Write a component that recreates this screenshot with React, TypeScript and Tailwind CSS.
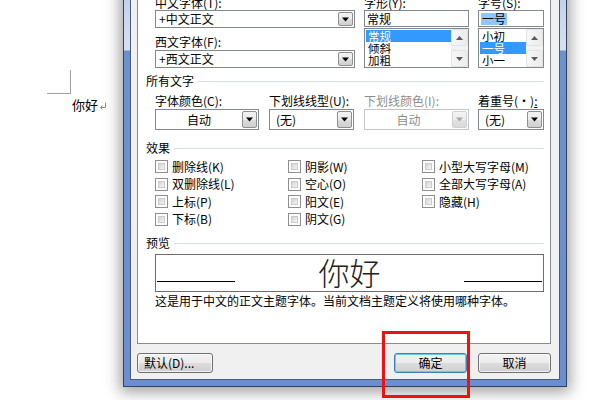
import React from "react";

const FONT = "font-['Noto_Sans_CJK_SC',sans-serif]";

function Arrow({ disabled }: { disabled?: boolean }) {
  return (
    <svg width="7" height="5" viewBox="0 0 7 5">
      <polygon points="0,0.5 7,0.5 3.5,4.5" fill={disabled ? "#a8a8a8" : "#000"} />
    </svg>
  );
}

function DropBtn({ disabled }: { disabled?: boolean }) {
  return (
    <div
      className={
        disabled
          ? "w-[15px] self-stretch my-[1px] mr-[1px] flex items-center justify-center rounded-[2px] border border-[#d0d0d0] bg-[linear-gradient(to_bottom,#f4f4f4,#ececec_50%,#e2e2e2_51%,#dadada)]"
          : "w-[15px] self-stretch my-[1px] mr-[1px] flex items-center justify-center rounded-[2px] border border-[#8e8f8f] bg-[linear-gradient(to_bottom,#f2f2f2,#ebebeb_50%,#dddddd_51%,#cfcfcf)]"
      }
    >
      <Arrow disabled={disabled} />
    </div>
  );
}

function ScrollArrow({ up }: { up?: boolean }) {
  return (
    <div className="h-[17px] flex items-center justify-center rounded-[2px] border border-[#e2e3e4] bg-[linear-gradient(to_right,#f7f7f7,#ececec)]">
      <svg width="7" height="4" viewBox="0 0 7 4">
        <polygon points={up ? "0,4 3.5,0 7,4" : "0,0 7,0 3.5,4"} fill="#5a5a5a" />
      </svg>
    </div>
  );
}

function ListBox({ items, sel }: { items: string[]; sel: number }) {
  return (
    <div className="mt-[1px] h-[40px] border border-[#828790] bg-white flex">
      <div className="flex-1 pt-[1px] pl-[1px]">
        {items.map((it, i) => (
          <div
            key={it}
            className={
              i === sel
                ? "h-[12px] leading-[12px] text-[11.5px] pl-[2px] bg-[#3399ff] text-white"
                : "h-[12px] leading-[12px] text-[11.5px] pl-[2px] text-black"
            }
          >
            {it}
          </div>
        ))}
      </div>
      <div className="w-[17px] flex flex-col justify-between bg-[#f3f3f3]">
        <ScrollArrow up />
        <ScrollArrow />
      </div>
    </div>
  );
}

function Header({ text }: { text: string }) {
  return (
    <div className="ml-[-9px] h-[12px] flex items-center">
      <span className="leading-[12px]">{text}</span>
      <div className="flex-1 ml-[4px] h-px bg-[#d5dfe5]" />
    </div>
  );
}

function Cb({ label }: { label: string }) {
  return (
    <div className="h-[17.5px] flex items-center">
      <span className="w-[13px] h-[13px] border border-[#8f8f8f] bg-white p-[2px] flex">
        <span className="flex-1 border border-[#cbcbcb] bg-[linear-gradient(135deg,#d2d2d2,#f6f6f6)]" />
      </span>
      <span className="ml-[4px] leading-[12px]">{label}</span>
    </div>
  );
}

export default function App() {
  return (
    <div className={`relative w-[600px] h-[400px] overflow-hidden bg-white text-black ${FONT}`}>
      {/* document */}
      <div className="pt-[70px] pl-[47px]">
        <div className="w-[24px] h-[24px] border-r border-b border-[#a0a0a0]" />
        <div className="pl-[25px] mt-[4px] flex items-end text-[13px] leading-[14px]">
          <span>你好</span>
          <svg width="8" height="8" viewBox="0 0 8 8" className="mb-[2px] ml-[1px]">
            <path d="M6.5 0.5 V5.5 H1.5" stroke="#8a8a8a" fill="none" strokeWidth="1" />
            <path d="M3.5 3.5 L1.5 5.5 L3.5 7.5" stroke="#8a8a8a" fill="none" strokeWidth="1" />
          </svg>
        </div>
      </div>

      {/* dialog window */}
      <div className="absolute left-[123px] top-[-30px] w-[444px] h-[417px] border border-[#34435a] p-[6px] bg-[linear-gradient(to_bottom,#b3c7e7_0px,#c7d6ee_40px,#d5e0f2_79px,#6c91d0_80px,#6a8ed0_100%)] shadow-[0_2px_14px_3px_rgba(0,0,0,0.38)]">
        <div className="h-full border border-[#4a5b78] bg-[#f0f0f0] pt-[6px] pl-[6px] pr-[8px] pb-[6px] flex flex-col text-[12px] leading-[12px]">
          {/* tab page */}
          <div className="h-[360px] shrink-0 border border-[#898c95] bg-white pl-[17px] pr-[6px] pt-[12px]">
            {/* row 1 */}
            <div className="flex">
              <div className="w-[200px]">
                <div className="h-[12px]">中文字体(T):</div>
                <div className="mt-[1px] h-[18px] border border-[#828790] bg-white flex items-center">
                  <span className="flex-1 pl-[3px]">+中文正文</span>
                  <DropBtn />
                </div>
                <div className="mt-[8px] h-[12px]">西文字体(F):</div>
                <div className="mt-[2px] h-[18px] border border-[#828790] bg-white flex items-center">
                  <span className="flex-1 pl-[3px]">+西文正文</span>
                  <DropBtn />
                </div>
              </div>
              <div className="w-[105px] ml-[9px]">
                <div className="h-[12px]">字形(Y):</div>
                <div className="mt-[1px] h-[17px] border border-[#828790] bg-white flex items-center pl-[2px]">
                  常规
                </div>
                <ListBox items={["常规", "倾斜", "加粗"]} sel={0} />
              </div>
              <div className="w-[66px] ml-[9px]">
                <div className="h-[12px]">字号(S):</div>
                <div className="mt-[1px] h-[17px] border border-[#828790] bg-white flex items-center pl-[2px]">
                  <span className="bg-[#90c6ff] px-[1px]">一号</span>
                </div>
                <ListBox items={["小初", "一号", "小一"]} sel={1} />
              </div>
            </div>

            {/* all text */}
            <div className="mt-[7px]">
              <Header text="所有文字" />
            </div>
            <div className="mt-[8px] flex">
              <div className="w-[104px]">
                <div className="h-[12px]">字体颜色(C):</div>
                <div className="mt-[2px] h-[21px] border border-[#828790] bg-white flex items-center">
                  <span className="flex-1 text-center">自动</span>
                  <DropBtn />
                </div>
              </div>
              <div className="w-[85px] ml-[10px]">
                <div className="h-[12px] whitespace-nowrap">下划线线型(U):</div>
                <div className="mt-[2px] h-[21px] border border-[#828790] bg-white flex items-center">
                  <span className="flex-1 pl-[6px]">(无)</span>
                  <DropBtn />
                </div>
              </div>
              <div className="w-[105px] ml-[10px]">
                <div className="h-[12px] text-[#8d8d8d]">下划线颜色(I):</div>
                <div className="mt-[2px] h-[21px] border border-[#c2c5ca] bg-white flex items-center">
                  <span className="flex-1 text-center text-[#8d8d8d]">自动</span>
                  <DropBtn disabled />
                </div>
              </div>
              <div className="w-[66px] ml-[9px]">
                <div className="h-[12px] whitespace-nowrap">
                  着重号(·)<span className="underline">:</span>
                </div>
                <div className="mt-[2px] h-[21px] border border-[#828790] bg-white flex items-center">
                  <span className="flex-1 pl-[6px]">(无)</span>
                  <DropBtn />
                </div>
              </div>
            </div>

            {/* effects */}
            <div className="mt-[12px]">
              <Header text="效果" />
            </div>
            <div className="mt-[4px] grid grid-cols-[133px_134px_1fr] grid-rows-[repeat(4,17.5px)] grid-flow-col">
              <Cb label="删除线(K)" />
              <Cb label="双删除线(L)" />
              <Cb label="上标(P)" />
              <Cb label="下标(B)" />
              <Cb label="阴影(W)" />
              <Cb label="空心(O)" />
              <Cb label="阳文(E)" />
              <Cb label="阴文(G)" />
              <Cb label="小型大写字母(M)" />
              <Cb label="全部大写字母(A)" />
              <Cb label="隐藏(H)" />
            </div>

            {/* preview */}
            <div className="mt-[9px]">
              <Header text="预览" />
            </div>
            <div className="mt-[5px] h-[38px] border border-[#6d6d6d] bg-white flex items-start">
              <div className="w-[78px] ml-[1px] mt-[26px] h-px bg-black" />
              <div className="flex-1 text-center text-[31px] leading-[34px] font-light text-[#222]">你好</div>
              <div className="w-[78px] mr-px mt-[26px] h-px bg-black" />
            </div>
            <div className="mt-[3px] h-[12px] whitespace-nowrap">
              这是用于中文的正文主题字体。当前文档主题定义将使用哪种字体。
            </div>
          </div>

          {/* buttons */}
          <div className="mt-[9px] flex justify-between h-[21px]">
            <div className="w-[76px] rounded-[3px] border border-[#707070] bg-[linear-gradient(to_bottom,#f2f2f2,#ebebeb_49%,#dddddd_50%,#cfcfcf)] shadow-[inset_0_0_0_1px_rgba(255,255,255,0.7)] flex items-center pl-[6px]">
              默认(D)...
            </div>
            <div className="flex gap-[11px]">
              <div className="w-[73px] rounded-[3px] border border-[#3c7fb1] bg-[linear-gradient(to_bottom,#f2f2f2,#ebebeb_49%,#dddddd_50%,#cfcfcf)] shadow-[inset_0_0_0_1px_#62cdf2] flex items-center justify-center">
                确定
              </div>
              <div className="w-[73px] rounded-[3px] border border-[#707070] bg-[linear-gradient(to_bottom,#f2f2f2,#ebebeb_49%,#dddddd_50%,#cfcfcf)] shadow-[inset_0_0_0_1px_rgba(255,255,255,0.7)] flex items-center justify-center">
                取消
              </div>
            </div>
          </div>
        </div>
      </div>

      {/* red highlight rectangle */}
      <div className="absolute left-[382px] top-[331px] w-[88px] h-[67px] border-[3px] border-[#f01010]" />
    </div>
  );
}
